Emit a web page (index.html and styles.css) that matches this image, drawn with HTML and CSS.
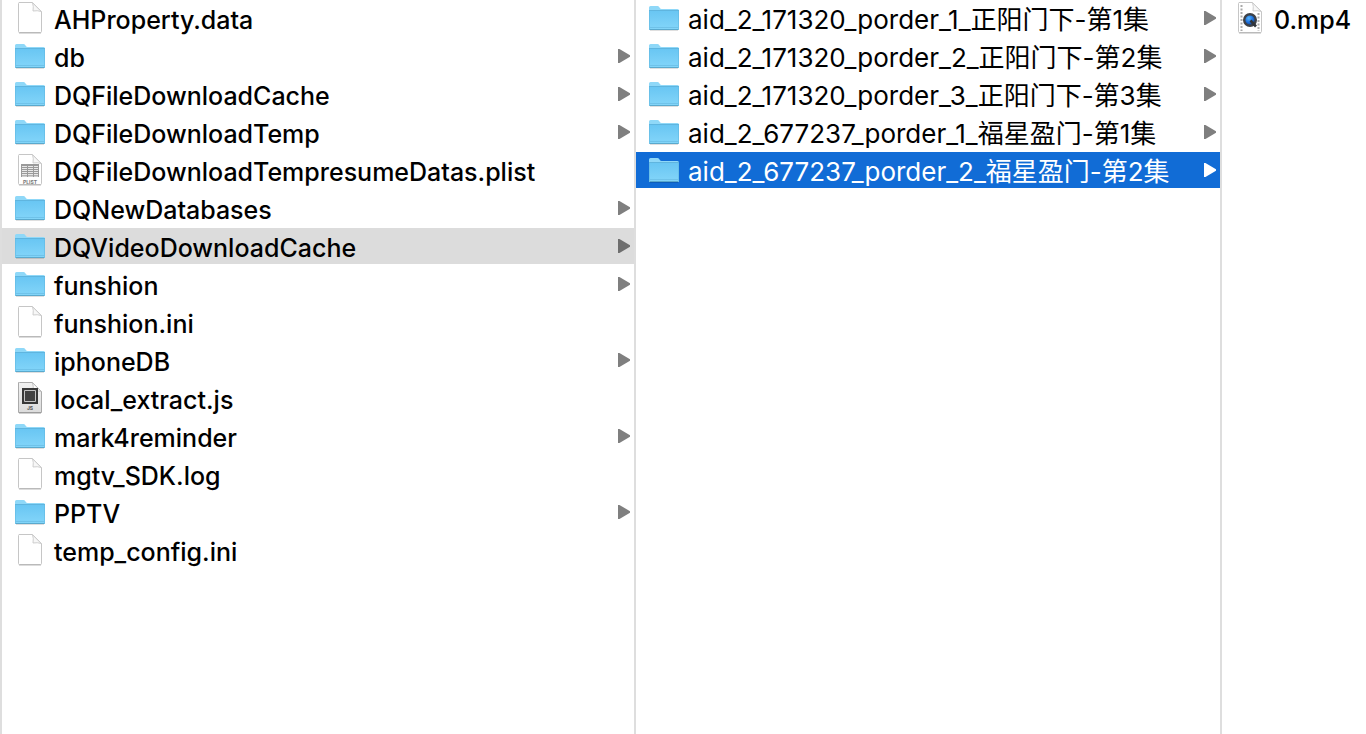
FILE: index.html
```html
<!DOCTYPE html>
<html lang="zh-CN">
<head>
<meta charset="utf-8">
<title>Files</title>
<link rel="stylesheet" href="styles.css">
</head>
<body>
<svg class="sprite" aria-hidden="true">
  <defs>
    <linearGradient id="front" x1="0" y1="0" x2="0" y2="1"><stop offset="0" stop-color="#69c6f3"/><stop offset="1" stop-color="#83d5f9"/></linearGradient>
    <linearGradient id="paper" x1="0" y1="0" x2="0" y2="1"><stop offset="0" stop-color="#f1f1f1"/><stop offset="1" stop-color="#dcdcdc"/></linearGradient>
    <radialGradient id="lens" cx=".4" cy=".35" r=".65"><stop offset="0" stop-color="#55b7ff"/><stop offset=".55" stop-color="#1d6fdb"/><stop offset="1" stop-color="#123a80"/></radialGradient>
    <symbol id="folder" viewBox="0 0 30 32">
      <path d="M0 28V5.500Q0 4 1.500 4H8.500Q9.500 4 10.200 5L11 6.200Q11.500 7 12.500 7H28.500Q30 7 30 8.500V28Z" fill="#8fd8f8"/>
      <path d="M0 9H30V26.500Q30 27.500 29 27.500H1Q0 27.500 0 26.500Z" fill="url(#front)"/>
      <path d="M0 8.500H30" stroke="#5fb5df" stroke-width="1"/>
      <path d="M.5 9V27M29.500 9V27" stroke="#62b9e2" opacity=".6"/>
      <path d="M1 25.500H29" stroke="#68bce4" opacity=".7"/>
      <path d="M.5 27.500H29.500" stroke="#5aa9cd"/>
      <path d="M1 28.500H29" stroke="#000" opacity=".12"/>
    </symbol>
    <symbol id="file" viewBox="0 0 30 32">
      <path d="M4 .5H17.500L26.500 9.500V29.500Q26.500 30.500 25.500 30.500H4.500Q3.500 30.500 3.500 29.500V1.500Q3.500 .5 4.500 .5Z" fill="#fff" stroke="#c6c6c6"/>
      <path d="M17.500 .8Q18.800 4 18 9Q22.500 8.200 26.200 9.500Z" fill="#f7f7f7" stroke="#c9c9c9" stroke-width=".9"/>
      <path d="M4 31H26" stroke="#a8a8a8" stroke-width=".8"/>
    </symbol>
    <symbol id="plist" viewBox="0 0 30 32">
      <use href="#file"/>
      <path d="M6 10H24V23H6Z" fill="#9a9a9a"/>
      <path d="M7 12.500H12M13 12.500H18M19 12.500H23M7 14.500H12M13 14.500H18M19 14.500H23M7 16.500H12M13 16.500H18M19 16.500H23M7 18.500H12M13 18.500H18M19 18.500H23M7 20.500H12M13 20.500H18M19 20.500H23M7 22.200H12M13 22.200H18M19 22.200H23" stroke="#e8e8e8"/>
      <text class="tag" x="15" y="29.500" text-anchor="middle" fill="#777">PLIST</text>
    </symbol>
    <symbol id="script" viewBox="0 0 30 32">
      <path d="M4.500 .5H17.500L26.500 9.500V30.500H3.500V.5Z" fill="url(#paper)" stroke="#aaa"/>
      <path d="M17.500 .8Q18.800 4 18 9Q22.500 8.200 26.200 9.500Z" fill="#fff" stroke="#b8b8b8" stroke-width=".8"/>
      <path d="M7 6H23V22H7Z" fill="#383838"/>
      <path d="M9.500 8.500H20.500V19.500H9.500Z" fill="#414141" stroke="#c4c4c4"/>
      <text class="tag" x="15" y="28" text-anchor="middle" fill="#555">JS</text>
      <path d="M4 31H26" stroke="#888" stroke-width=".8"/>
    </symbol>
    <symbol id="movie" viewBox="0 0 30 32">
      <use href="#file"/>
      <path d="M6.500 3V29M23.500 11V29" stroke="#aaa" stroke-width="2" stroke-dasharray="2 1.500"/>
      <circle cx="15" cy="18" r="5.800" fill="url(#lens)" stroke="#3d4147" stroke-width="2.400"/>
      <path d="M15.500 18.500L21 24.500" stroke="#30343a" stroke-width="2.600"/>
    </symbol>
  </defs>
</svg>
<main class="browser">
  <ul class="column">
    <li><a class="row" href="#"><svg class="icon"><use href="#file"/></svg><span class="name">AHProperty.data</span></a></li>
    <li><a class="row parent" href="#"><svg class="icon"><use href="#folder"/></svg><span class="name">db</span></a></li>
    <li><a class="row parent" href="#"><svg class="icon"><use href="#folder"/></svg><span class="name">DQFileDownloadCache</span></a></li>
    <li><a class="row parent" href="#"><svg class="icon"><use href="#folder"/></svg><span class="name">DQFileDownloadTemp</span></a></li>
    <li><a class="row" href="#"><svg class="icon"><use href="#plist"/></svg><span class="name">DQFileDownloadTempresumeDatas.plist</span></a></li>
    <li><a class="row parent" href="#"><svg class="icon"><use href="#folder"/></svg><span class="name">DQNewDatabases</span></a></li>
    <li><a class="row parent open" href="#"><svg class="icon"><use href="#folder"/></svg><span class="name">DQVideoDownloadCache</span></a></li>
    <li><a class="row parent" href="#"><svg class="icon"><use href="#folder"/></svg><span class="name">funshion</span></a></li>
    <li><a class="row" href="#"><svg class="icon"><use href="#file"/></svg><span class="name">funshion.ini</span></a></li>
    <li><a class="row parent" href="#"><svg class="icon"><use href="#folder"/></svg><span class="name">iphoneDB</span></a></li>
    <li><a class="row" href="#"><svg class="icon"><use href="#script"/></svg><span class="name">local_extract.js</span></a></li>
    <li><a class="row parent" href="#"><svg class="icon"><use href="#folder"/></svg><span class="name">mark4reminder</span></a></li>
    <li><a class="row" href="#"><svg class="icon"><use href="#file"/></svg><span class="name">mgtv_SDK.log</span></a></li>
    <li><a class="row parent" href="#"><svg class="icon"><use href="#folder"/></svg><span class="name">PPTV</span></a></li>
    <li><a class="row" href="#"><svg class="icon"><use href="#file"/></svg><span class="name">temp_config.ini</span></a></li>
  </ul>
  <ul class="column episodes">
    <li><a class="row parent" href="#"><svg class="icon"><use href="#folder"/></svg><span class="name">aid_2_171320_porder_1_正阳门下-第1集</span></a></li>
    <li><a class="row parent" href="#"><svg class="icon"><use href="#folder"/></svg><span class="name">aid_2_171320_porder_2_正阳门下-第2集</span></a></li>
    <li><a class="row parent" href="#"><svg class="icon"><use href="#folder"/></svg><span class="name">aid_2_171320_porder_3_正阳门下-第3集</span></a></li>
    <li><a class="row parent" href="#"><svg class="icon"><use href="#folder"/></svg><span class="name">aid_2_677237_porder_1_福星盈门-第1集</span></a></li>
    <li><a class="row parent selected" href="#"><svg class="icon"><use href="#folder"/></svg><span class="name">aid_2_677237_porder_2_福星盈门-第2集</span></a></li>
  </ul>
  <ul class="column">
    <li><a class="row" href="#"><svg class="icon"><use href="#movie"/></svg><span class="name">0.mp4</span></a></li>
  </ul>
</main>
</body>
</html>
```
FILE: styles.css
```css
* {
  box-sizing: border-box;
}

body {
  margin: 0;
  background: #fff;
  color: #000;
  font-family: Inter, "Noto Sans CJK SC", sans-serif;
  font-size: 25px;
  font-weight: 500;
  line-height: 36px;
}

.sprite {
  position: absolute;
  width: 0;
  height: 0;
}

.browser {
  display: grid;
  grid-template-columns: 634fr 586fr 144fr;
  min-height: 100vh;
  border-left: 2px solid #dedede;
}

.column {
  display: flex;
  flex-direction: column;
  gap: 2px;
  min-width: 0;
  margin: 0;
  padding: 0;
  list-style: none;
  border-right: 2px solid #dedede;
}

.column:last-child {
  border-right: 0;
}

.episodes {
  font-size: 26px;
  font-weight: 400;
}

.row {
  display: flex;
  align-items: center;
  gap: 9px;
  height: 36px;
  padding: 0 4px 0 13px;
  color: inherit;
  text-decoration: none;
}

.icon {
  flex: none;
  width: 30px;
  height: 32px;
}

.name {
  flex: 1;
  min-width: 0;
  padding-top: 3px;
  white-space: nowrap;
}

.parent::after {
  content: "";
  width: 12px;
  height: 14px;
  background: #7f7f7f;
  clip-path: polygon(0 0, 12% 0, 100% 44%, 100% 56%, 12% 100%, 0 100%);
}

.open {
  background: #dcdcdc;
}

.open::after {
  background: #6e6e6e;
}

.selected {
  background: #116cd6;
  color: #fff;
}

.selected::after {
  background: #fff;
}

.tag {
  font-size: 5px;
  font-weight: 700;
  line-height: 1;
}
```
